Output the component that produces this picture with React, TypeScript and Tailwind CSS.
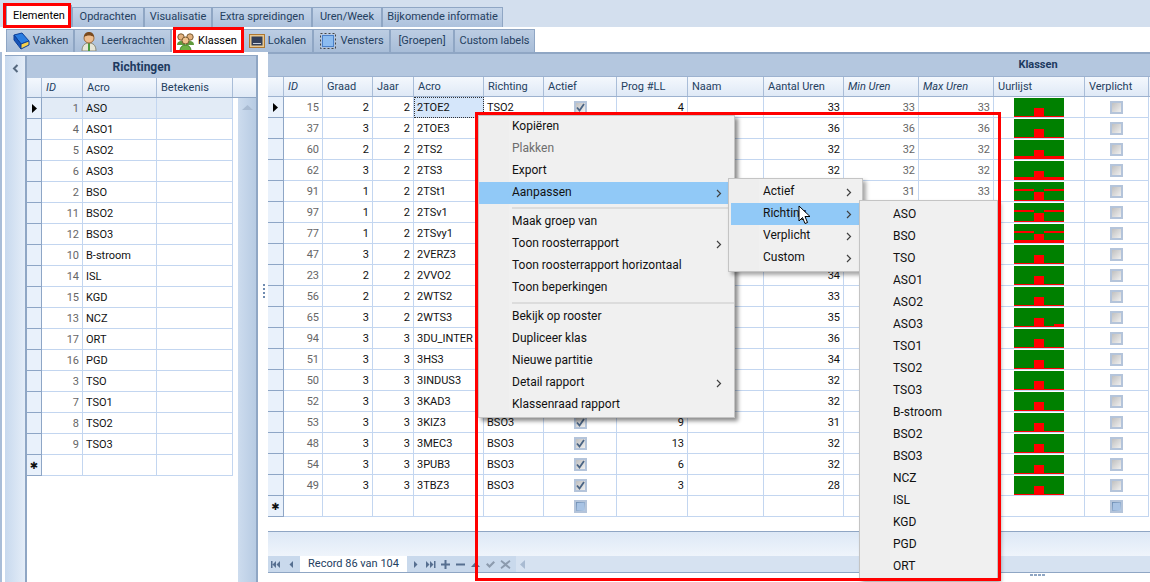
import React from 'react';

const rightCols = 'grid grid-cols-[16px_39px_50px_41px_70px_60px_73px_71px_76px_80px_75px_75px_91px_64px]';
const leftCols = 'grid grid-cols-[15px_41px_74px_76px]';

const leftRows: [number, string][] = [
  [1, 'ASO'], [4, 'ASO1'], [5, 'ASO2'], [6, 'ASO3'], [2, 'BSO'], [11, 'BSO2'], [12, 'BSO3'], [10, 'B-stroom'], [14, 'ISL'],
  [15, 'KGD'], [13, 'NCZ'], [17, 'ORT'], [16, 'PGD'], [3, 'TSO'], [7, 'TSO1'], [8, 'TSO2'], [9, 'TSO3'],
];

type Row = { id: number; graad: number; jaar: number; acro: string; richting?: string; prog?: string; uren?: number; min?: number; max?: number; bottom: number; strip?: boolean; extra?: boolean };

// cellen achter het contextmenu blijven leeg
const rows: Row[] = [
  { id: 15, graad: 2, jaar: 2, acro: '2TOE2', richting: 'TSO2', prog: '4', uren: 33, min: 33, max: 33, bottom: 1 },
  { id: 37, graad: 3, jaar: 2, acro: '2TOE3', uren: 36, min: 36, max: 36, bottom: 1 },
  { id: 60, graad: 2, jaar: 2, acro: '2TS2', uren: 32, min: 32, max: 32, bottom: 3 },
  { id: 62, graad: 3, jaar: 2, acro: '2TS3', uren: 32, min: 32, max: 32, bottom: 3 },
  { id: 91, graad: 1, jaar: 2, acro: '2TSt1', min: 31, max: 33, bottom: 1, strip: true },
  { id: 97, graad: 1, jaar: 2, acro: '2TSv1', bottom: 1, strip: true },
  { id: 77, graad: 1, jaar: 2, acro: '2TSvy1', bottom: 3, strip: true },
  { id: 47, graad: 3, jaar: 2, acro: '2VERZ3', bottom: 1 },
  { id: 23, graad: 2, jaar: 2, acro: '2VVO2', uren: 34, bottom: 1 },
  { id: 56, graad: 2, jaar: 2, acro: '2WTS2', uren: 33, bottom: 1 },
  { id: 65, graad: 3, jaar: 2, acro: '2WTS3', uren: 35, bottom: 1, extra: true },
  { id: 94, graad: 3, jaar: 3, acro: '3DU_INTER', uren: 36, bottom: 1 },
  { id: 51, graad: 3, jaar: 3, acro: '3HS3', uren: 34, bottom: 1 },
  { id: 50, graad: 3, jaar: 3, acro: '3INDUS3', uren: 32, bottom: 1 },
  { id: 52, graad: 3, jaar: 3, acro: '3KAD3', uren: 32, bottom: 1 },
  { id: 53, graad: 3, jaar: 3, acro: '3KIZ3', richting: 'BSO3', prog: '9', uren: 31, bottom: 1 },
  { id: 48, graad: 3, jaar: 3, acro: '3MEC3', richting: 'BSO3', prog: '13', uren: 32, bottom: 1 },
  { id: 54, graad: 3, jaar: 3, acro: '3PUB3', richting: 'BSO3', prog: '6', uren: 32, bottom: 1 },
  { id: 49, graad: 3, jaar: 3, acro: '3TBZ3', richting: 'BSO3', prog: '3', uren: 28, bottom: 1 },
];

const menuOne: (string | null)[] = [
  'Kopiëren', 'Plakken', 'Export', 'Aanpassen', null, 'Maak groep van', 'Toon roosterrapport', 'Toon roosterrapport horizontaal', 'Toon beperkingen', null,
  'Bekijk op rooster', 'Dupliceer klas', 'Nieuwe partitie', 'Detail rapport', 'Klassenraad rapport',
];
const menuOneSub = ['Aanpassen', 'Toon roosterrapport', 'Detail rapport'];
const menuThree = ['ASO', 'BSO', 'TSO', 'ASO1', 'ASO2', 'ASO3', 'TSO1', 'TSO2', 'TSO3', 'B-stroom', 'BSO2', 'BSO3', 'NCZ', 'ISL', 'KGD', 'PGD', 'ORT'];

const MenuItem = ({ label, active, disabled, sub, pad, chevron = 'right-[12px]' }: { label: string; active?: boolean; disabled?: boolean; sub?: boolean; pad: string; chevron?: string }) => (
  <div className={`relative h-[22px] leading-[21px] ${pad} ${active ? 'bg-[#91c9f7]' : ''} ${disabled ? 'text-[#6d6d6d]' : 'text-[#111]'}`}>
    {label}
    {sub && (
      <svg width="6" height="9" viewBox="0 0 6 9" className={`absolute top-[7px] ${chevron}`}>
        <path d="M1 1l3.500 3.500L1 8" fill="none" stroke="#404040" strokeWidth="1.2" />
      </svg>
    )}
  </div>
);

const HourBar = ({ bottom, strip, extra }: { bottom: number; strip?: boolean; extra?: boolean }) => (
  <svg width="50" height="19" viewBox="0 0 50 19" className="block">
    <rect width="50" height="19" fill="#008000" />
    <rect x="20" y="10" width="10" height="9" fill="#ff0000" />
    <rect y={19 - bottom} width="50" height={bottom} fill="#ff0000" />
    {strip && <rect y="7" width="20" height="2" fill="#ff0000" />}
    {strip && <rect x="30" y="7" width="20" height="2" fill="#ff0000" />}
    {extra && <rect x="40" y="16" width="10" height="3" fill="#ff0000" />}
  </svg>
);

const Check = ({ on, fresh }: { on?: boolean; fresh?: boolean }) => {
  if (fresh) {
    return <div className="w-[13px] h-[13px] border-2 border-[#b4c4da] bg-gradient-to-br from-[#6f8fb5] to-[#b6cde8] p-px"><div className="w-full h-full bg-[#a8c3e4]" /></div>;
  }
  return (
    <div className="w-[13px] h-[13px] border-2 border-[#b4c4da] bg-gradient-to-br from-[#c0c0c0] to-[#f0f0f0] flex items-center justify-center">
      {on && (
        <svg width="9" height="9" viewBox="0 0 9 9">
          <path d="M1 4.500l2.500 3L8 1" fill="none" stroke="#4a6484" strokeWidth="1.8" />
        </svg>
      )}
    </div>
  );
};

const Pointer = () => (
  <svg width="5" height="9" viewBox="0 0 5 9"><path d="M0 0l5 4.500L0 9z" fill="#000" /></svg>
);

const BookIcon = () => (
  <svg width="18" height="18" viewBox="0 0 18 18">
    <path d="M2 3l8-2 7 8-8 3z" fill="#2a7de1" stroke="#0b3f99" />
    <path d="M2 3l7 9 0 5-7-9z" fill="#1653b8" stroke="#0b3f99" />
    <path d="M9 12l8-3v4l-8 4z" fill="#f6d04a" stroke="#0b3f99" />
  </svg>
);
const PersonIcon = () => (
  <svg width="18" height="20" viewBox="0 0 18 20">
    <path d="M2 20c0-6 3-8 7-8s7 2 7 8z" fill="#e6e6d8" stroke="#8a8a78" />
    <rect x="8" y="12" width="2" height="8" fill="#4c9a3c" />
    <circle cx="9" cy="7" r="5" fill="#eebd8e" stroke="#9a6a3c" />
    <path d="M4 6c0-4 3-5 5-5s5 1 5 5c-3-2-7-2-10 0z" fill="#7a4a1e" />
  </svg>
);
const GroupIcon = () => (
  <svg width="19" height="19" viewBox="0 0 19 19">
    <circle cx="5" cy="5" r="3.200" fill="#e3b27f" stroke="#7a5a30" />
    <circle cx="14" cy="5" r="3.200" fill="#e3b27f" stroke="#7a5a30" />
    <path d="M1 13c0-3 2-4 4-4s4 1 4 4z" fill="#5f9a3c" />
    <path d="M10 13c0-3 2-4 4-4s4 1 4 4z" fill="#5f9a3c" />
    <circle cx="9.500" cy="8.500" r="3.500" fill="#f1c48f" stroke="#7a5a30" />
    <path d="M4 19c0-4 2.500-6 5.500-6s5.500 2 5.500 6z" fill="#6cb043" stroke="#3c7a20" />
  </svg>
);
const RoomIcon = () => (
  <svg width="16" height="16" viewBox="0 0 16 16">
    <rect x="0.500" y="1.500" width="15" height="13" fill="#e8c890" stroke="#b07830" />
    <rect x="2.500" y="3.500" width="11" height="9" fill="#34405a" />
    <rect x="4" y="10" width="8" height="1" fill="#c8d0dc" />
  </svg>
);
const WindowIcon = () => (
  <svg width="18" height="18" viewBox="0 0 18 18">
    <rect x="1.500" y="1.500" width="15" height="15" fill="none" stroke="#444" strokeDasharray="2 2" />
    <rect x="3.500" y="3.500" width="11" height="11" fill="#8cbcf0" stroke="#4a80c8" />
  </svg>
);

const subTabs = [
  { label: 'Vakken', icon: <BookIcon />, w: 'w-[68px]' },
  { label: 'Leerkrachten', icon: <PersonIcon />, w: 'w-[97px]' },
  { label: 'Klassen', icon: <GroupIcon />, w: 'w-[71px]', active: true },
  { label: 'Lokalen', icon: <RoomIcon />, w: 'w-[71px]' },
  { label: 'Vensters', icon: <WindowIcon />, w: 'w-[77px]' },
  { label: '[Groepen]', w: 'w-[64px]' },
  { label: 'Custom labels', w: 'w-[81px]' },
];

const mainTabs = [
  { label: 'Elementen', w: 'w-[66px]', active: true },
  { label: 'Opdrachten', w: 'w-[72px]' },
  { label: 'Visualisatie', w: 'w-[68px]' },
  { label: 'Extra spreidingen', w: 'w-[100px]' },
  { label: 'Uren/Week', w: 'w-[70px]' },
  { label: 'Bijkomende informatie', w: 'w-[121px]' },
];

const headCell = 'h-full px-[4px] pt-[2px] flex items-center border-r border-[#a9bdd8] text-[#24405f] truncate';
const cell = 'h-[21px] px-[3px] flex items-center border-r border-b border-[#c3d6f0] overflow-hidden whitespace-nowrap';
const textCell = `${cell} pt-[2px]`;
const indicator = 'h-[21px] flex items-center justify-center border-r border-b border-[#8ea6c6] bg-[#e9f1fb]';
const menuBg = 'bg-[linear-gradient(90deg,#eeeeee_30px,#f0f0f0_30px)]';

const NavGlyph = ({ d, fill = '#566f90', className = '' }: { d: string; fill?: string; className?: string }) => (
  <svg width="11" height="11" viewBox="0 0 11 11" className={`shrink-0 ${className}`}><path d={d} fill={fill} /></svg>
);

export default function App() {
  return (
    <div className="relative w-[1150px] h-[582px] overflow-hidden bg-white text-[11px] text-[#111] font-['Roboto',sans-serif]">
      <div className="h-[27px] bg-[#d3dfee] flex items-end pl-[6px]">
        {mainTabs.map(t => (
          <div key={t.label} className={`${t.w} flex items-center justify-center border border-b-0 border-[#8fa6c4] ${t.active ? 'bg-white relative z-10 h-[22px] text-black' : 'h-[20px] bg-gradient-to-b from-[#c5d5e9] to-[#adc1dc] text-[#24405f]'}`}>
            {t.label}
          </div>
        ))}
      </div>
      <div className="h-[25px] flex items-end pl-[6px] pt-[2px]">
        {subTabs.map(t => (
          <div key={t.label} className={`${t.w} h-[23px] flex items-center justify-center gap-[3px] border border-[#8fa6c4] border-b-0 ${t.active ? 'bg-white text-black' : 'bg-gradient-to-b from-[#bccde3] to-[#a8bdd8] text-[#24405f]'}`}>
            {t.icon}
            <span>{t.label}</span>
          </div>
        ))}
      </div>

      <div className="flex h-[530px]">
        <div className="w-[5px] shrink-0 bg-white border-l-2 border-[#a9bdd8]" />
        <div className="w-[22px] shrink-0 mt-[3px] flex justify-center pt-[8px] border-r-2 border-t border-[#8fa6c4] bg-gradient-to-r from-[#c8d9ee] to-[#e4edf8]">
          <svg width="7" height="9" viewBox="0 0 7 9"><path d="M5.500 1L2 4.500 5.500 8" fill="none" stroke="#56697f" strokeWidth="2" /></svg>
        </div>

        <div className="w-[231px] shrink-0 mt-[3px] flex flex-col border-r-2 border-[#8fa6c4] bg-white">
          <div className="h-[23px] shrink-0 bg-[#b4c7df] border-t border-[#8fa6c4] flex items-center justify-center font-bold text-[#1d3a5f] text-[12px]">Richtingen</div>
          <div className="h-[20px] shrink-0 grid grid-cols-[15px_41px_74px_76px_1fr] bg-gradient-to-b from-[#f4f8fd] to-[#dfe9f6] border-b border-[#8fa6c4]">
            <div className={headCell} />
            <div className={`${headCell} italic`}>ID</div>
            <div className={headCell}>Acro</div>
            <div className={headCell}>Betekenis</div>
            <div />
          </div>
          <div className="flex flex-1 min-h-0">
            <div className="w-[206px] shrink-0">
              {leftRows.map(([id, acro], i) => (
                <div key={id} className={`${leftCols} ${i === 0 ? 'bg-[#e2ebf6]' : ''}`}>
                  <div className={indicator}>{i === 0 && <Pointer />}</div>
                  <div className={`${textCell} justify-end text-[#666]`}>{id}</div>
                  <div className={textCell}>{acro}</div>
                  <div className={cell} />
                </div>
              ))}
              <div className={leftCols}>
                <div className={`${indicator} text-[10px] font-['DejaVu_Sans',sans-serif]`}>✱</div>
                <div className={cell} />
                <div className={cell} />
                <div className={cell} />
              </div>
            </div>
            <div className="flex-1 flex justify-end">
              <div className="w-[18px] bg-gradient-to-r from-[#cddcee] to-[#b7cbe3] flex justify-center pt-[7px]">
                <svg width="11" height="5" viewBox="0 0 11 5"><path d="M5.500 0L11 5H0z" fill="#a9bbd2" /></svg>
              </div>
            </div>
          </div>
        </div>

        <div className="w-[10px] shrink-0 flex flex-col items-center justify-center gap-[2px] pb-[52px] pl-[2px]">
          {[0, 1, 2, 3].map(d => <span key={d} className="w-[2px] h-[2px] bg-[#6f8bb0]" />)}
        </div>

        <div className="flex-1 min-w-0 flex flex-col">
          <div className="h-[24px] shrink-0 bg-[#b4c7df] border-t-2 border-[#8fa6c4] flex items-center justify-center pl-[658px] font-bold text-[#1d3a5f]">Klassen</div>
          <div className={`${rightCols} h-[21px] shrink-0 bg-gradient-to-b from-[#f4f8fd] to-[#dfe9f6] border-y border-[#9db2cf]`}>
            <div className={headCell} />
            <div className={`${headCell} italic`}>ID</div>
            <div className={headCell}>Graad</div>
            <div className={headCell}>Jaar</div>
            <div className={headCell}>Acro</div>
            <div className={headCell}>Richting</div>
            <div className={headCell}>Actief</div>
            <div className={headCell}>Prog #LL</div>
            <div className={headCell}>Naam</div>
            <div className={headCell}>Aantal Uren</div>
            <div className={`${headCell} italic`}>Min Uren</div>
            <div className={`${headCell} italic`}>Max Uren</div>
            <div className={headCell}>Uurlijst</div>
            <div className={headCell}>Verplicht</div>
          </div>
          {rows.map((r, i) => (
            <div key={r.id} className={rightCols}>
              <div className={indicator}>{i === 0 && <Pointer />}</div>
              <div className={`${textCell} justify-end text-[#666]`}>{r.id}</div>
              <div className={`${textCell} justify-end`}>{r.graad}</div>
              <div className={`${textCell} justify-end`}>{r.jaar}</div>
              <div className={`${textCell} ${i === 0 ? 'bg-[#d5e6fa] outline-1 outline-dotted -outline-offset-1 outline-[#333]' : ''}`}>{r.acro}</div>
              <div className={textCell}>{r.richting}</div>
              <div className={`${cell} justify-center`}>{r.prog && <Check on />}</div>
              <div className={`${textCell} justify-end`}>{r.prog}</div>
              <div className={cell} />
              <div className={`${textCell} justify-end`}>{r.uren}</div>
              <div className={`${textCell} justify-end text-[#666]`}>{r.min}</div>
              <div className={`${textCell} justify-end text-[#666]`}>{r.max}</div>
              <div className={`${cell} justify-center px-0`}><HourBar bottom={r.bottom} strip={r.strip} extra={r.extra} /></div>
              <div className={`${cell} justify-center`}><Check /></div>
            </div>
          ))}
          <div className={rightCols}>
            <div className={`${indicator} text-[10px] font-['DejaVu_Sans',sans-serif]`}>✱</div>
            {[0, 1, 2, 3, 4].map(c => <div key={c} className={cell} />)}
            <div className={`${cell} justify-center`}><Check fresh /></div>
            {[0, 1, 2, 3, 4, 5].map(c => <div key={c} className={cell} />)}
            <div className={`${cell} justify-center`}><Check fresh /></div>
          </div>
          <div className="h-[14px] shrink-0" />
          <div className="h-[25px] shrink-0 border-t border-[#8fa6c4] bg-gradient-to-b from-[#dde8f6] to-[#eff4fb]" />
          <div className="h-[17px] shrink-0 bg-[#c9d9ec] flex items-center gap-[4px] pl-[2px] border-b border-[#8fa6c4]">
            <NavGlyph d="M1 2h1.500v7H1zM6 2v7L2.500 5.500zM10 2v7L6.500 5.500z" />
            <NavGlyph className="ml-[1px]" d="M7 2v7L3.500 5.500z" />
            <div className="w-[107px] h-full -mx-px bg-white flex items-center justify-center text-[#24405f]">Record 86 van 104</div>
            <NavGlyph d="M4 2v7l3.500-3.500z" />
            <NavGlyph d="M1 2v7l3.500-3.500zM5 2v7l3.500-3.500zM9 2h1.500v7H9z" />
            <NavGlyph d="M4.500 1h2v3.500H10v2H6.500V10h-2V6.500H1v-2h3.500z" />
            <NavGlyph d="M1 4.500h9v2H1z" />
            <NavGlyph d="M5.500 3L10 8H1z" />
            <NavGlyph fill="#8c9bae" d="M1 5.500l1.500-1.500 2 2L8.500 2 10 3.500 4.500 9z" />
            <NavGlyph fill="#8c9bae" d="M1.500 1L5.500 4 9.500 1l1 1.500-3.500 3 3.500 3-1 1.500-4-3-4 3-1-1.500 3.500-3-3.500-3z" />
            <div className="flex-1 h-full ml-[1px] bg-[#d6e2f1] flex items-center pl-[4px]">
              <svg width="5" height="9" viewBox="0 0 5 9"><path d="M5 0v9L0 4.500z" fill="#a9bbd2" /></svg>
            </div>
          </div>
          <div className="flex-1 relative">
            <div className="absolute left-[762px] top-[1px] flex gap-[1px]">
              {[0, 1, 2, 3].map(d => <span key={d} className="w-[3px] h-[2px] bg-[#8fa6c4]" />)}
            </div>
          </div>
        </div>
      </div>

      <div className={`absolute left-[478px] top-[115px] w-[257px] h-[303px] ${menuBg} border border-[#c4c4c4] shadow-[3px_3px_4px_rgba(0,0,0,0.45)] text-[12px] z-20`}>
        {menuOne.map((m, i) =>
          m === null ? (
            <div key={i} className="h-[7px] flex items-center pl-[33px]"><div className="h-[2px] w-full bg-[#dcdcdc]" /></div>
          ) : (
            <MenuItem key={m} label={m} pad="pl-[33px]" active={m === 'Aanpassen'} disabled={m === 'Plakken'} sub={menuOneSub.includes(m)} />
          ),
        )}
      </div>

      <div className={`absolute left-[728px] top-[178px] w-[135px] h-[94px] pt-[2px] pl-[2px] pr-[3px] ${menuBg} border border-[#c4c4c4] shadow-[3px_3px_4px_rgba(0,0,0,0.35)] text-[12px] z-30`}>
        {['Actief', 'Richting', 'Verplicht', 'Custom'].map(m => (
          <MenuItem key={m} label={m} pad="pl-[32px]" active={m === 'Richting'} sub chevron="right-[7px]" />
        ))}
      </div>

      <div className={`absolute left-[859px] top-[200px] w-[139px] h-[380px] pt-[3px] ${menuBg} border border-[#c4c4c4] shadow-[3px_3px_4px_rgba(0,0,0,0.35)] text-[12px] z-40`}>
        {menuThree.map(m => (
          <MenuItem key={m} label={m} pad="pl-[33px]" />
        ))}
      </div>

      {/* rode kaders uit de screenshot */}
      <div className="absolute left-[3px] top-[3px] w-[68px] h-[25px] border-[3px] border-[#f00] z-50" />
      <div className="absolute left-[173px] top-[27px] w-[71px] h-[26px] border-[3px] border-[#f00] z-50" />
      <div className="absolute left-[475px] top-[112px] w-[526px] h-[469px] border-[3px] border-[#f00] z-50" />

      <svg width="14" height="21" viewBox="0 0 14 21" className="absolute left-[798px] top-[205px] z-[60]">
        <path d="M1 1v15l3.500-3.500 2.500 6 2.500-1-2.500-6h5z" fill="#fff" stroke="#000" />
      </svg>
    </div>
  );
}
